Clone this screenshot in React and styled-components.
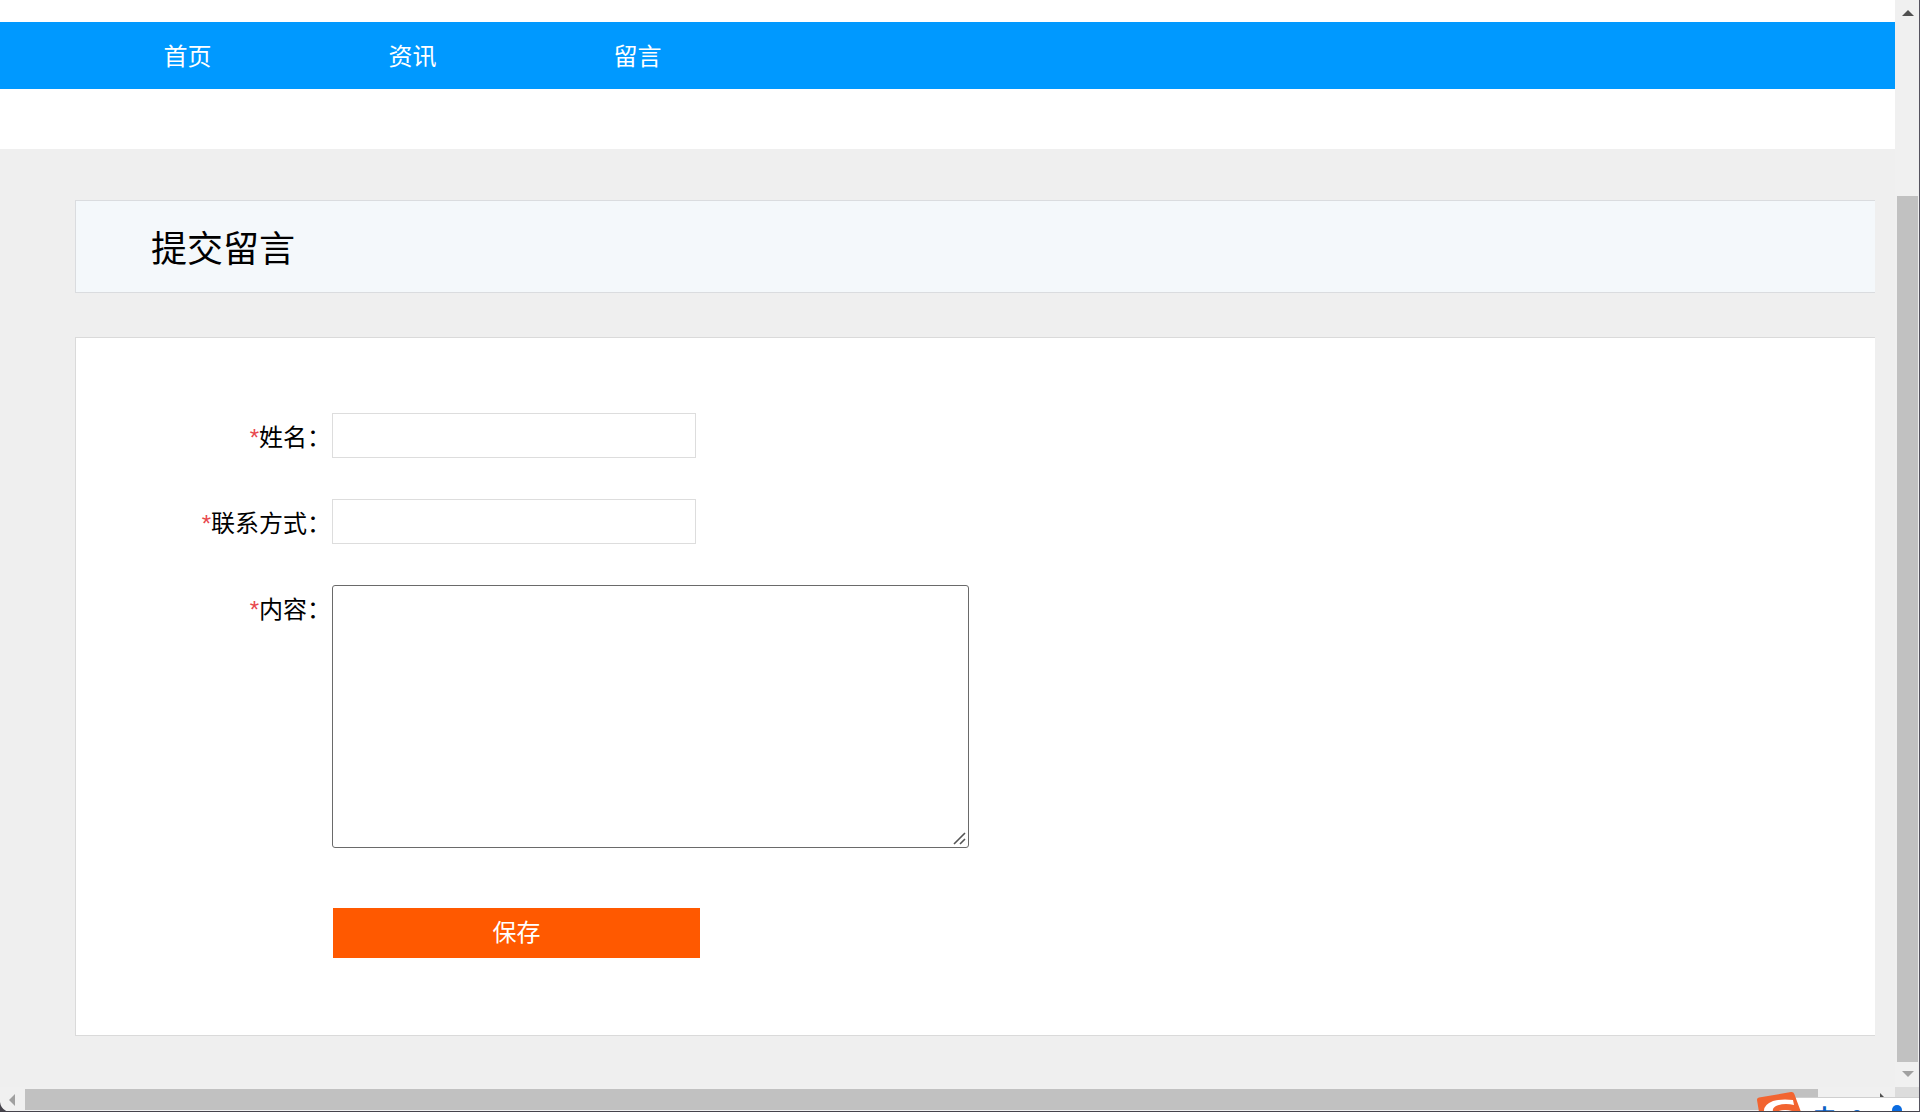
import React from "react";
import styled, { createGlobalStyle } from "styled-components";

const GlobalStyle = createGlobalStyle`
  * {
    box-sizing: border-box;
  }
  body {
    margin: 0;
    background: #ffffff;
    color: #000000;
    font-family: "Liberation Sans", "Noto Sans CJK SC", sans-serif;
    font-size: 24px;
    line-height: 36px;
    overflow: hidden;
  }
`;

const Window = styled.div`
  position: relative;
  display: grid;
  grid-template-columns: 1fr 24px;
  grid-template-rows: 1fr 24px;
  height: 100vh;
  overflow: hidden;
  border-right: 1px solid #55535f;
  border-bottom: 1px solid #45434b;
`;

const Page = styled.div`
  display: flex;
  flex-direction: column;
  min-width: 0;
  overflow: hidden;
`;

const Header = styled.header`
  padding: 22px 0 60px;
`;

const Nav = styled.nav`
  display: flex;
  padding: 0 75px;
  background: #0099ff;
`;

const NavLink = styled.a`
  width: 225px;
  padding-top: 2px;
  line-height: 65px;
  text-align: center;
  text-decoration: none;
  color: #ffffff;
`;

const Main = styled.main`
  display: flex;
  flex: 1;
  flex-direction: column;
  gap: 44px;
  padding: 51px 20px 0 75px;
  background: #efefef;
`;

const Title = styled.h1`
  margin: 0;
  padding: 6px 75px 0;
  border: 1px solid #dadcdf;
  border-right: 0;
  background: #f4f8fb;
  font-size: 36px;
  font-weight: 400;
  line-height: 85px;
`;

const Form = styled.form`
  display: flex;
  flex-direction: column;
  gap: 41px;
  padding: 75px 0 77px;
  border: 1px solid #dadada;
  border-right: 0;
  background: #ffffff;
`;

const Field = styled.div`
  display: flex;
  align-items: flex-start;
`;

const Label = styled.label`
  width: 256px;
  padding: 4px 1px 0 0;
  line-height: 41px;
  text-align: right;
`;

const Required = styled.span`
  color: #e8474d;
`;

const Input = styled.input`
  width: 364px;
  height: 45px;
  padding: 0 8px;
  border: 1px solid #dddddd;
  outline: 0;
  font: inherit;
`;

const TextAreaBox = styled.div`
  position: relative;
`;

const TextArea = styled.textarea`
  display: block;
  width: 637px;
  height: 263px;
  padding: 8px;
  border: 1px solid #6a6a6a;
  border-radius: 3px;
  outline: 0;
  font: inherit;
  &::-webkit-resizer {
    background: transparent;
  }
`;

const Grip = styled.svg`
  position: absolute;
  right: 3px;
  bottom: 3px;
  pointer-events: none;
`;

const Actions = styled.div`
  padding: 19px 0 0 257px;
`;

const SaveButton = styled.button`
  display: block;
  width: 367px;
  height: 50px;
  padding: 0;
  border: 0;
  background: #ff5900;
  color: #ffffff;
  font: inherit;
`;

const VerticalBar = styled.div`
  display: flex;
  flex-direction: column;
  align-items: center;
  padding: 10px 1px 10px 2px;
  background: #f0f0f0;
`;

const VerticalThumb = styled.div`
  flex: 1;
  align-self: stretch;
  margin: 180px 0 9px;
  background: #c1c1c1;
`;

const HorizontalBar = styled.div`
  display: flex;
  align-items: center;
  padding: 2px 77px 1px 9px;
  background: #f0f0f0;
`;

const HorizontalThumb = styled.div`
  flex: 1;
  align-self: stretch;
  margin-left: 10px;
  background: #c1c1c1;
`;

const Corner = styled.div`
  background: #dcdcdc;
`;

const WindowEdge = styled.svg`
  position: absolute;
  left: 0;
  bottom: -1px;
`;

const InputMethod = styled.svg`
  position: absolute;
  right: -1px;
  bottom: -1px;
`;

const links = ["首页", "资讯", "留言"];

function App() {
  return (
    <Window>
      <GlobalStyle />
      <Page>
        <Header>
          <Nav>
            {links.map((link) => (
              <NavLink key={link} href="#">
                {link}
              </NavLink>
            ))}
          </Nav>
        </Header>
        <Main>
          <Title>提交留言</Title>
          <Form onSubmit={(e) => e.preventDefault()}>
            <Field>
              <Label htmlFor="name">
                <Required>*</Required>姓名：
              </Label>
              <Input id="name" type="text" />
            </Field>
            <Field>
              <Label htmlFor="contact">
                <Required>*</Required>联系方式：
              </Label>
              <Input id="contact" type="text" />
            </Field>
            <Field>
              <Label htmlFor="content">
                <Required>*</Required>内容：
              </Label>
              <TextAreaBox>
                <TextArea id="content" />
                <Grip width="13" height="13" viewBox="0 0 13 13">
                  <path
                    d="M1 12L12 1M7 12L12 7"
                    fill="none"
                    stroke="#555555"
                    strokeWidth="1.6"
                  />
                </Grip>
              </TextAreaBox>
            </Field>
            <Actions>
              <SaveButton type="submit">保存</SaveButton>
            </Actions>
          </Form>
        </Main>
      </Page>
      <VerticalBar>
        <svg width="12" height="6" viewBox="0 0 12 6">
          <path d="M6 0L12 6H0Z" fill="#505050" />
        </svg>
        <VerticalThumb />
        <svg width="12" height="6" viewBox="0 0 12 6">
          <path d="M0 0H12L6 6Z" fill="#a0a0a0" />
        </svg>
      </VerticalBar>
      <HorizontalBar>
        <svg width="6" height="12" viewBox="0 0 6 12">
          <path d="M6 0V12L0 6Z" fill="#a0a0a0" />
        </svg>
        <HorizontalThumb />
      </HorizontalBar>
      <Corner />
      <WindowEdge width="9" height="10" viewBox="0 0 9 10">
        <path d="M0 0Q1 8 9 10H0Z" fill="#45434b" />
      </WindowEdge>
      <InputMethod width="170" height="24" viewBox="0 0 170 24">
        <path d="M130 5L135 10H130Z" fill="#505050" />
        <path d="M46 10H170V24H46Z" fill="#ffffff" />
        <path d="M46 9.5H170" stroke="#cfcfcf" />
        <path
          d="M9 9.500L41 4Q43.500 3.600 44.300 6L51 24H9L7 12Q6.800 10 9 9.500Z"
          fill="#f26430"
        />
        <path
          d="M43 12L44 17Q34 14.500 26 18Q22 20 23 24H14Q13 17 23 13Q32 10.500 43 12Z"
          fill="#ffffff"
        />
        <path d="M26 24Q35 20 45 24Z" fill="#ffffff" />
        <text
          x="63"
          y="38"
          fill="#0b61c4"
          fontFamily="Noto Sans CJK SC, sans-serif"
          fontSize="23"
          fontWeight="700"
        >
          中
        </text>
        <circle cx="107" cy="26" r="4" fill="#0b61c4" />
        <circle cx="147" cy="22" r="5" fill="#0a6be0" />
      </InputMethod>
    </Window>
  );
}

export default App;
